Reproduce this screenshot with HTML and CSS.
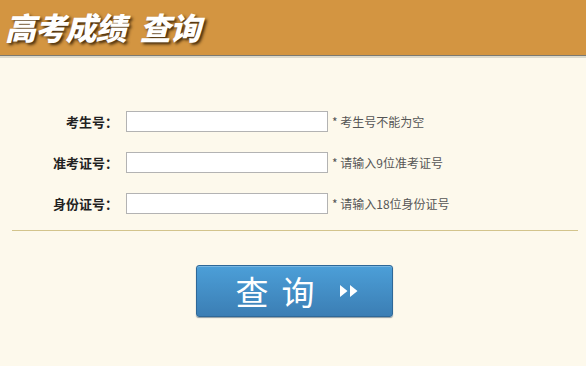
FILE: index.html
```html
<!DOCTYPE html>
<html lang="zh-CN">
<head>
<meta charset="utf-8">
<title>高考成绩查询</title>
<link rel="stylesheet" href="styles.css">
</head>
<body>
<header class="header">
  <h1 class="title"><span>高考成绩</span><span class="title-b">查询</span></h1>
</header>
<main class="main">
  <form class="form">
    <label class="label" for="ksh">考生号<span class="colon">：</span></label>
    <input class="input" id="ksh" type="text">
    <span class="hint">* 考生号不能为空</span>

    <label class="label" for="zkz">准考证号<span class="colon">：</span></label>
    <input class="input" id="zkz" type="text">
    <span class="hint">* 请输入9位准考证号</span>

    <label class="label" for="sfz">身份证号<span class="colon">：</span></label>
    <input class="input" id="sfz" type="text">
    <span class="hint">* 请输入18位身份证号</span>
  </form>
  <hr class="divider">
  <div class="actions">
    <button class="btn" type="button">
      <span class="btn-text">查</span><span class="btn-text">询</span>
      <svg class="btn-icon" width="20" height="16" viewBox="0 0 20 16"><path d="M1 2 L8.5 8 L1 14 Z M11 2 L18.5 8 L11 14 Z" fill="#fff"/></svg>
    </button>
  </div>
</main>
</body>
</html>
```

FILE: styles.css
```css
html, body {
  margin: 0;
  padding: 0;
}
body {
  background: #fdf9ec;
  font-family: "Noto Sans CJK SC", "Noto Sans", sans-serif;
  color: #333;
  width: 586px;
  height: 366px;
  overflow: hidden;
}
.header {
  height: 55px;
  background: #d39541;
  border-bottom: 1px solid #7d7a70;
  box-shadow: 0 2px 0 #dcdacd;
  display: flex;
  align-items: center;
  padding-left: 5px;
}
.title {
  margin: 0;
  font-size: 31px;
  font-weight: 900;
  font-style: italic;
  color: #fff;
  letter-spacing: -0.8px;
  line-height: 1;
  text-shadow: 2px 2px 3px rgba(50, 30, 5, 0.9);
  margin-top: -3px;
}
.title-b {
  margin-left: 14px;
}
.main {
  padding-top: 55px;
}
.form {
  display: grid;
  grid-template-columns: 126px 202px auto;
  row-gap: 20px;
  align-items: center;
}
.label {
  text-align: right;
  font-size: 13px;
  font-weight: 700;
  color: #222;
  padding-right: 8px;
}
.colon {
  display: inline-block;
  width: 13px;
  text-align: right;
}
.input {
  box-sizing: border-box;
  width: 202px;
  height: 21px;
  margin: 0;
  border: 1px solid #b3b3b3;
  background: #fff;
  padding: 0 3px;
  grid-column: 2;
}
.hint {
  font-size: 12px;
  color: #555;
  padding-left: 4px;
}
.divider {
  margin: 16px 8px 0 12px;
  border: 0;
  height: 1px;
  background: #d3c48c;
}
.actions {
  display: flex;
  justify-content: center;
  padding-top: 34px;
  padding-left: 2px;
}
.btn {
  width: 197px;
  height: 52px;
  box-sizing: border-box;
  border: 1px solid #2e6898;
  border-radius: 3px;
  background: linear-gradient(#4c9fd8, #3b7eb4);
  box-shadow: inset 0 1px 0 rgba(255,255,255,0.25), 0 1px 1px rgba(30,60,90,0.5);
  display: flex;
  align-items: center;
  justify-content: center;
  padding: 0 0 0 6px;
  cursor: pointer;
}
.btn-text {
  font-family: "Noto Sans CJK SC", sans-serif;
  font-size: 33px;
  color: #fff;
  line-height: 1;
  margin-right: 13px;
}
.btn-text + .btn-text {
  margin-right: 24px;
}
.btn-icon {
  display: block;
}
```
